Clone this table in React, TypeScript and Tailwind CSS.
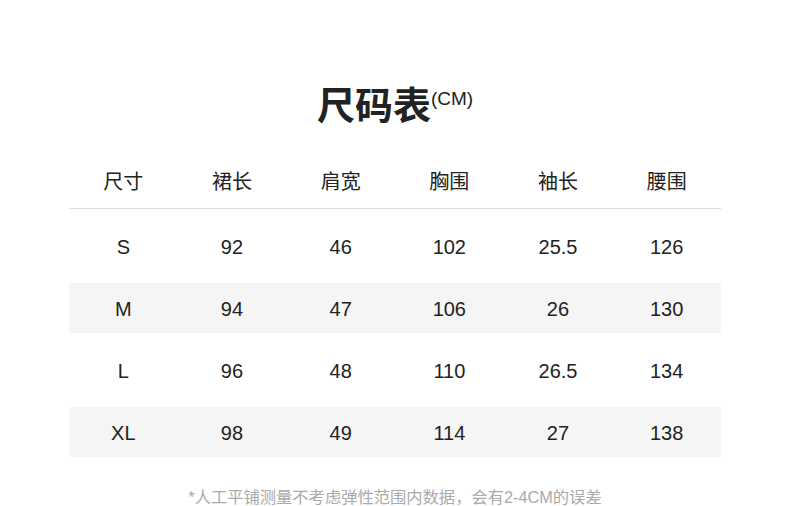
import React from "react";

const headers = ["尺寸", "裙长", "肩宽", "胸围", "袖长", "腰围"];
const rows = [
  ["S", "92", "46", "102", "25.5", "126"],
  ["M", "94", "47", "106", "26", "130"],
  ["L", "96", "48", "110", "26.5", "134"],
  ["XL", "98", "49", "114", "27", "138"],
];

export default function App() {
  return (
    <div
      className="w-[790px] h-[506px] bg-white overflow-hidden text-[#222]"
      style={{ fontFamily: '"Liberation Sans", "Noto Sans CJK SC", sans-serif' }}
    >
      <div className="pt-[82px] flex justify-center">
        <div className="flex items-start h-[48px]">
          <span className="text-[38px] leading-[48px] font-bold">尺码表</span>
          <span className="text-[19px] leading-[19px] mt-[7px]">(CM)</span>
        </div>
      </div>
      <div className="w-[652px] ml-[69px] mt-[24px]">
        <div className="grid grid-cols-6 h-[55px] items-center border-b border-[#dcdcdc]">
          {headers.map((h) => (
            <div key={h} className="text-center text-[20px] leading-[24px] pt-[1px]">
              {h}
            </div>
          ))}
        </div>
        <div className="flex flex-col gap-[12px] mt-[12px]">
          {rows.map((r, i) => (
            <div
              key={r[0]}
              className={`grid grid-cols-6 h-[50px] items-center ${i % 2 === 1 ? "bg-[#f5f5f5]" : "bg-white"}`}
            >
              {r.map((c, j) => (
                <div key={j} className="text-center text-[20px] leading-[24px] pt-[2px]">
                  {c}
                </div>
              ))}
            </div>
          ))}
        </div>
        <div className="mt-[30px] text-center text-[16.3px] leading-[20px] text-[#aaaaaa]">
          *人工平铺测量不考虑弹性范围内数据，会有2-4CM的误差
        </div>
      </div>
    </div>
  );
}
